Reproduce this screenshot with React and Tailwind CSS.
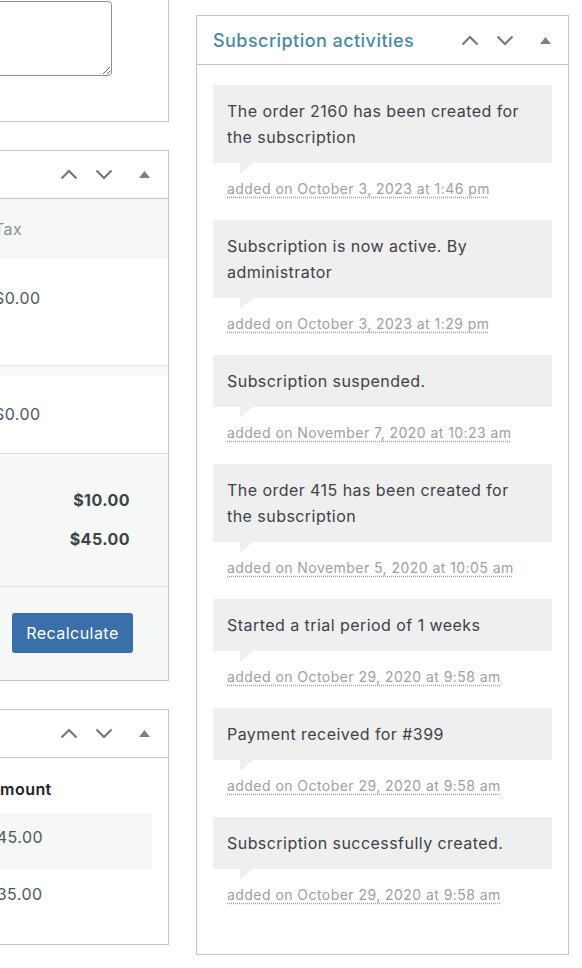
import React from 'react';

const notes = [
  { text: 'The order 2160 has been created for the subscription', date: 'added on October 3, 2023 at 1:46 pm' },
  { text: 'Subscription is now active. By administrator', date: 'added on October 3, 2023 at 1:29 pm' },
  { text: 'Subscription suspended.', date: 'added on November 7, 2020 at 10:23 am' },
  { text: 'The order 415 has been created for the subscription', date: 'added on November 5, 2020 at 10:05 am' },
  { text: 'Started a trial period of 1 weeks', date: 'added on October 29, 2020 at 9:58 am' },
  { text: 'Payment received for #399', date: 'added on October 29, 2020 at 9:58 am' },
  { text: 'Subscription successfully created.', date: 'added on October 29, 2020 at 9:58 am' },
];

function ChevronUp() {
  return (
    <svg width="18" height="11" viewBox="0 0 18 11" fill="none" stroke="#74787d" strokeWidth="2.2">
      <path d="M1.5 9.5 L9 2 L16.5 9.5" />
    </svg>
  );
}

function ChevronDown() {
  return (
    <svg width="18" height="11" viewBox="0 0 18 11" fill="none" stroke="#74787d" strokeWidth="2.2">
      <path d="M1.5 1.5 L9 9 L16.5 1.5" />
    </svg>
  );
}

function Toggle() {
  return (
    <svg width="11" height="7" viewBox="0 0 11 7">
      <path d="M5.5 0 L11 7 H0 Z" fill="#7c8085" />
    </svg>
  );
}

// box header controls: move up, move down, collapse
function Handles({ className }) {
  return (
    <div className={`flex items-center ${className || ''}`}>
      <ChevronUp />
      <div className="w-[17px]" />
      <ChevronDown />
      <div className="w-[26px]" />
      <Toggle />
    </div>
  );
}

export default function App() {
  return (
    <div
      className="w-[582px] h-[968px] bg-white flex overflow-hidden text-[#50575e] tracking-[0.45px]"
      style={{ fontFamily: 'Inter, "Noto Sans", sans-serif' }}
    >
      {/* Left column, cut off at the page edge */}
      <div className="w-[169px] shrink-0 flex flex-col">
        {/* Notes textarea panel */}
        <div className="h-[122px] border-r border-b border-[#c3c4c7] pt-[1px]">
          <textarea
            readOnly
            className="block -ml-[20px] w-[132px] h-[75px] border border-[#8c8f94] rounded-[4px] bg-white"
          />
        </div>

        {/* Totals panel */}
        <div className="mt-[28px] border-r border-y border-[#c3c4c7]">
          <div className="h-[48px] border-b border-[#c3c4c7] flex items-center justify-end pr-[18px]">
            <Handles />
          </div>
          <div className="h-[60px] bg-[#f6f7f7] flex items-center text-[16px] text-[#8c8f94]">
            <span className="-ml-[6px]">Tax</span>
          </div>
          <div className="h-[107px] pt-[27px] text-[16px] leading-[24px] border-b border-[#e5e5e5]">
            <span className="-ml-[6px] block">$0.00</span>
          </div>
          <div className="h-[9px] bg-[#f9f9f9]" />
          <div className="h-[79px] pt-[27px] text-[16px] leading-[24px] border-b border-[#dcdcde]">
            <span className="-ml-[6px] block">$0.00</span>
          </div>
          <div className="h-[133px] bg-[#f6f7f7] border-b border-[#dcdcde] pt-[34px] pr-[38px] flex flex-col items-end gap-[15px] text-[16px] leading-[24px] font-bold text-[#3c434a]">
            <span>$10.00</span>
            <span>$45.00</span>
          </div>
          <div className="h-[93px] bg-[#f6f7f7] pt-[26px] pl-[12px]">
            <button className="w-[121px] h-[40px] rounded-[3px] bg-[#3a6fa9] text-white text-[16px] tracking-[0.45px]">
              Recalculate
            </button>
          </div>
        </div>

        {/* Payments panel */}
        <div className="mt-[28px] h-[236px] border-r border-y border-[#c3c4c7]">
          <div className="h-[48px] border-b border-[#c3c4c7] flex items-center justify-end pr-[18px]">
            <Handles />
          </div>
          <div className="pr-[16px]">
            <div className="h-[55px] pt-[19px] text-[16px] leading-[24px] font-semibold text-[#1d2327]">
              <span className="-ml-[12px] block">Amount</span>
            </div>
            <div className="h-[57px] bg-[#f6f7f7] pt-[12px] text-[16px] leading-[24px]">
              <span className="-ml-[14px] block">$45.00</span>
            </div>
            <div className="h-[57px] pt-[12px] text-[16px] leading-[24px]">
              <span className="-ml-[14px] block">$35.00</span>
            </div>
          </div>
        </div>
      </div>

      {/* Subscription activities box */}
      <div className="ml-[27px] mt-[15px] w-[373px] h-[940px] shrink-0 border border-[#c3c4c7] flex flex-col">
        <div className="h-[49px] border-b border-[#c3c4c7] flex items-center justify-between pl-[16px] pr-[17px]">
          <h2 className="text-[18px] font-medium text-[#4b89a6]">Subscription activities</h2>
          <Handles />
        </div>
        <ul className="pt-[20px] px-[16px]">
          {notes.map((n, i) => (
            <li key={i} className="mb-[21px]">
              <div className="relative bg-[#efefef] px-[14px] py-[13px] text-[16px] leading-[26px] text-[#3c434a]">
                {n.text}
                <span className="absolute left-[27px] -bottom-[11px] w-0 h-0 border-solid border-t-[11px] border-r-[13px] border-t-[#efefef] border-r-transparent" />
              </div>
              <p className="mt-[16px] pl-[14px] text-[14px] leading-[20px] text-[#a0a0a0]">
                <abbr className="no-underline underline decoration-dotted decoration-[#a0a0a0] underline-offset-[3px]">
                  {n.date}
                </abbr>
              </p>
            </li>
          ))}
        </ul>
      </div>
    </div>
  );
}
